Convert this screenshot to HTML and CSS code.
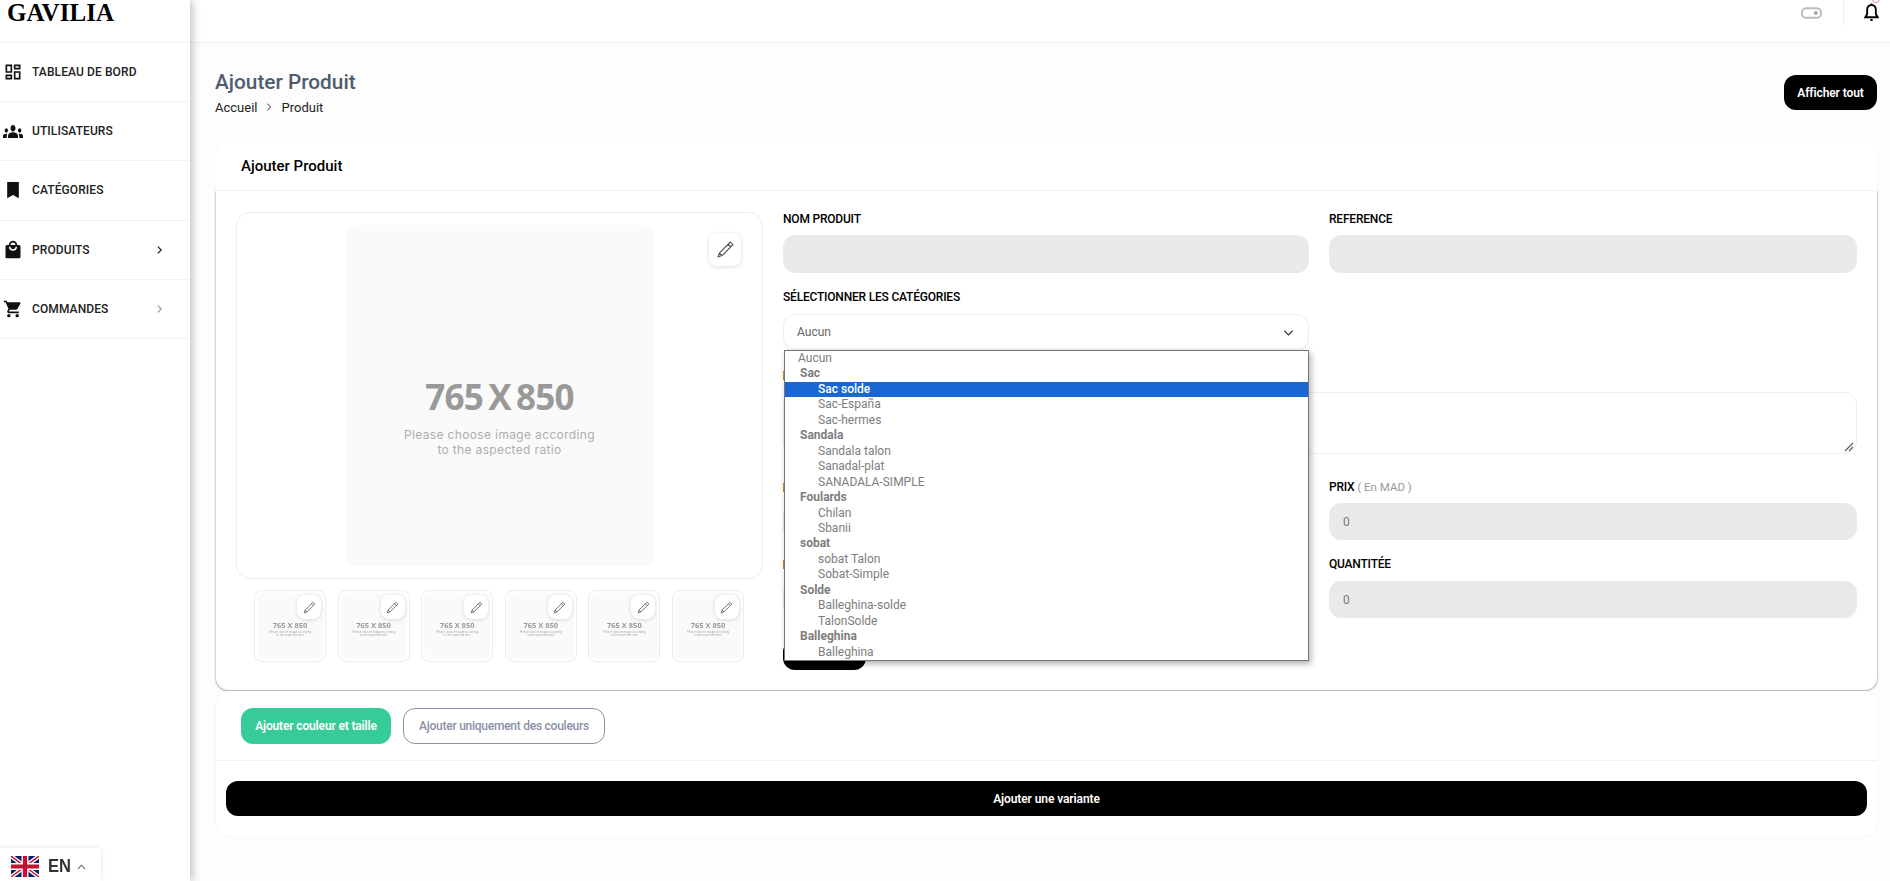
FILE: index.html
```html
<!DOCTYPE html>
<html lang="fr">
<head>
<meta charset="utf-8">
<title>Ajouter Produit</title>
<link rel="stylesheet" href="styles.css">
</head>
<body>
<div class="app">
  <aside class="sidebar">
    <div class="logo">GAVILIA</div>
    <nav class="menu">
      <a class="menu-item"><svg class="menu-icon" viewBox="0 0 24 24"><path d="M19 5v2h-4V5h4M9 5v6H5V5h4m10 8v6h-4v-6h4M9 17v2H5v-2h4M21 3h-8v6h8V3zM11 3H3v10h8V3zm10 8h-8v10h8V11zm-10 4H3v6h8v-6z"/></svg><span>TABLEAU DE BORD</span></a>
      <a class="menu-item"><span class="icon-slot"><svg class="icon-group" viewBox="0 5 24 14" preserveAspectRatio="none"><path d="M12 12.75c1.63 0 3.07.39 4.24.9 1.08.48 1.76 1.56 1.76 2.73V18H6v-1.61c0-1.18.68-2.26 1.76-2.73 1.17-.52 2.61-.91 4.24-.91zM4 13c1.1 0 2-.9 2-2s-.9-2-2-2-2 .9-2 2 .9 2 2 2zm1.13 1.1C4.76 14.04 4.39 14 4 14c-.99 0-1.93.21-2.78.58C.48 14.9 0 15.62 0 16.43V18h4.5v-1.61c0-.83.23-1.61.63-2.29zM20 13c1.1 0 2-.9 2-2s-.9-2-2-2-2 .9-2 2 .9 2 2 2zm4 3.43c0-.81-.48-1.53-1.22-1.85C21.93 14.21 20.99 14 20 14c-.39 0-.76.04-1.13.1.4.68.63 1.46.63 2.29V18H24v-1.57zM12 6c1.66 0 3 1.34 3 3s-1.34 3-3 3-3-1.34-3-3 1.34-3 3-3z"/></svg></span><span>UTILISATEURS</span></a>
      <a class="menu-item"><svg class="menu-icon" viewBox="0 0 24 24"><path d="M5 2.500h14V22l-7-4-7 4z"/></svg><span>CATÉGORIES</span></a>
      <a class="menu-item"><svg class="menu-icon" viewBox="0 0 24 24"><path d="M19 6h-2c0-2.76-2.24-5-5-5S7 3.24 7 6H5c-1.1 0-1.99.9-1.99 2L3 20c0 1.1.9 2 2 2h14c1.1 0 2-.9 2-2V8c0-1.1-.9-2-2-2zm-7-3c1.66 0 3 1.34 3 3H9c0-1.66 1.34-3 3-3zm0 10c-2.76 0-5-2.24-5-5h2c0 1.66 1.34 3 3 3s3-1.34 3-3h2c0 2.76-2.24 5-5 5z"/></svg><span>PRODUITS</span><svg class="menu-chevron" viewBox="0 0 8 12"><path d="M2 2l4 4-4 4"/></svg></a>
      <a class="menu-item"><svg class="menu-icon" viewBox="0 0 24 24"><path d="M7 18c-1.100 0-1.990.9-1.990 2S5.900 22 7 22s2-.9 2-2-.9-2-2-2zM1 2v2h2l3.600 7.590-1.350 2.450c-.16.28-.25.61-.25.96 0 1.100.9 2 2 2h12v-2H7.420c-.14 0-.25-.11-.25-.25l.03-.12.9-1.630h7.450c.75 0 1.410-.41 1.750-1.030l3.580-6.490c.08-.14.12-.31.12-.48 0-.55-.45-1-1-1H5.210l-.94-2H1zm16 16c-1.100 0-1.990.9-1.990 2s.89 2 1.990 2 2-.9 2-2-.9-2-2-2z"/></svg><span>COMMANDES</span><svg class="menu-chevron muted" viewBox="0 0 8 12"><path d="M2 2l4 4-4 4"/></svg></a>
    </nav>
    <div class="lang">
      <svg class="flag" viewBox="0 0 60 45"><rect width="60" height="45" fill="#012169"/><path d="M0 0l60 45M60 0L0 45" stroke="#fff" stroke-width="9"/><path d="M0 0l60 45M60 0L0 45" stroke="#c8102e" stroke-width="3"/><path d="M30 0v45M0 22.500h60" stroke="#fff" stroke-width="15"/><path d="M30 0v45M0 22.500h60" stroke="#c8102e" stroke-width="9"/></svg>
      <span class="lang-code">EN</span>
      <svg class="lang-chevron" viewBox="0 0 10 6"><path d="M1 5l4-4 4 4"/></svg>
    </div>
  </aside>

  <div class="main">
    <header class="topbar">
      <svg class="toggle" viewBox="0 0 22 12"><rect x="1" y="1" width="20" height="10" rx="4.500"/><circle cx="15.500" cy="6" r="2.200"/></svg>
      <div class="topbar-sep"></div>
      <div class="bell-wrap">
        <span class="bell-badge"></span>
        <svg class="bell" viewBox="0 0 18 20"><path d="M9 2.200c-3 0-4.600 2.300-4.600 5v4.300L2.500 15h13l-1.900-3.500V7.200c0-2.700-1.600-5-4.600-5z"/><path d="M9 .6v1.600M7.800 18h2.400"/></svg>
      </div>
    </header>

    <main class="content">
      <div class="page-head">
        <div>
          <h1 class="page-title">Ajouter Produit</h1>
          <div class="crumbs"><span>Accueil</span><svg class="crumb-sep" viewBox="0 0 8 12"><path d="M2 2l4 4-4 4"/></svg><span>Produit</span></div>
        </div>
        <button class="btn-black btn-all">Afficher tout</button>
      </div>

      <section class="card card-form">
        <div class="card-head">Ajouter Produit</div>
        <div class="card-body">
          <div class="gallery">
            <div class="main-frame">
              <div class="placeholder">
                <div class="ph-size">765 X 850</div>
                <div class="ph-note">Please choose image according<br>to the aspected ratio</div>
              </div>
              <span class="edit edit-big"><svg viewBox="0 0 24 24"><path d="M17.500 3.500l3 3L8 19l-4.500 1.500L5 16zM15 6l3 3M5 16l3 3"/></svg></span>
            </div>
            <div class="thumbs">
              <div class="thumb"><div class="thumb-in"><div class="th-size">765 X 850</div><div class="th-note">Please choose image according<br>to the aspected ratio</div></div><span class="edit edit-small"><svg viewBox="0 0 24 24"><path d="M17.500 3.500l3 3L8 19l-4.500 1.500L5 16zM15 6l3 3M5 16l3 3"/></svg></span></div>
              <div class="thumb"><div class="thumb-in"><div class="th-size">765 X 850</div><div class="th-note">Please choose image according<br>to the aspected ratio</div></div><span class="edit edit-small"><svg viewBox="0 0 24 24"><path d="M17.500 3.500l3 3L8 19l-4.500 1.500L5 16zM15 6l3 3M5 16l3 3"/></svg></span></div>
              <div class="thumb"><div class="thumb-in"><div class="th-size">765 X 850</div><div class="th-note">Please choose image according<br>to the aspected ratio</div></div><span class="edit edit-small"><svg viewBox="0 0 24 24"><path d="M17.500 3.500l3 3L8 19l-4.500 1.500L5 16zM15 6l3 3M5 16l3 3"/></svg></span></div>
              <div class="thumb"><div class="thumb-in"><div class="th-size">765 X 850</div><div class="th-note">Please choose image according<br>to the aspected ratio</div></div><span class="edit edit-small"><svg viewBox="0 0 24 24"><path d="M17.500 3.500l3 3L8 19l-4.500 1.500L5 16zM15 6l3 3M5 16l3 3"/></svg></span></div>
              <div class="thumb"><div class="thumb-in"><div class="th-size">765 X 850</div><div class="th-note">Please choose image according<br>to the aspected ratio</div></div><span class="edit edit-small"><svg viewBox="0 0 24 24"><path d="M17.500 3.500l3 3L8 19l-4.500 1.500L5 16zM15 6l3 3M5 16l3 3"/></svg></span></div>
              <div class="thumb"><div class="thumb-in"><div class="th-size">765 X 850</div><div class="th-note">Please choose image according<br>to the aspected ratio</div></div><span class="edit edit-small"><svg viewBox="0 0 24 24"><path d="M17.500 3.500l3 3L8 19l-4.500 1.500L5 16zM15 6l3 3M5 16l3 3"/></svg></span></div>
            </div>
          </div>

          <div class="form">
            <div class="row row-1">
              <div><div class="label label-low">NOM PRODUIT</div><div class="input"></div></div>
              <div><div class="label label-low">REFERENCE</div><div class="input"></div></div>
            </div>
            <div class="row row-2">
              <div>
                <div class="label label-low label-select">SÉLECTIONNER LES CATÉGORIES</div>
                <div class="select">
                  <span>Aucun</span>
                  <svg class="select-chevron" viewBox="0 0 12 8"><path d="M1.500 1.500 6 6l4.500-4.500"/></svg>
                  <div class="dropdown">
                    <div class="opt-none">Aucun</div>
                    <div class="opt-group">Sac</div>
                    <div class="opt selected">Sac solde</div>
                    <div class="opt">Sac-España</div>
                    <div class="opt">Sac-hermes</div>
                    <div class="opt-group">Sandala</div>
                    <div class="opt">Sandala talon</div>
                    <div class="opt">Sanadal-plat</div>
                    <div class="opt">SANADALA-SIMPLE</div>
                    <div class="opt-group">Foulards</div>
                    <div class="opt">Chilan</div>
                    <div class="opt">Sbanii</div>
                    <div class="opt-group">sobat</div>
                    <div class="opt">sobat Talon</div>
                    <div class="opt">Sobat-Simple</div>
                    <div class="opt-group">Solde</div>
                    <div class="opt">Balleghina-solde</div>
                    <div class="opt">TalonSolde</div>
                    <div class="opt-group">Balleghina</div>
                    <div class="opt">Balleghina</div>
                  </div>
                </div>
              </div>
            </div>
            <div class="row-wide">
              <div class="label-slot"><span class="label-edge"></span></div>
              <div class="textarea">
                <svg class="grip" viewBox="0 0 10 10"><path d="M1 9l8-8M5 9l4-4"/></svg>
              </div>
            </div>
            <div class="row row-3">
              <div><div class="label-slot label-slot-tight"><span class="label-edge"></span></div><div class="input input-short"></div></div>
              <div><div class="label label-tight">PRIX <span class="unit">( En MAD )</span></div><div class="input input-short">0</div></div>
            </div>
            <div class="row row-4">
              <div><div class="label-slot"><span class="label-edge"></span></div><div class="input input-short"></div></div>
              <div><div class="label">QUANTITÉE</div><div class="input input-short">0</div></div>
            </div>
            <div class="hidden-btn"></div>
          </div>
        </div>
      </section>

      <section class="card card-variant">
        <div class="variant-tabs">
          <button class="btn-green">Ajouter couleur et taille</button>
          <button class="btn-outline">Ajouter uniquement des couleurs</button>
        </div>
        <div class="variant-foot">
          <button class="btn-black btn-wide">Ajouter une variante</button>
        </div>
      </section>
    </main>
  </div>
</div>
</body>
</html>
```
FILE: styles.css
```css
* { box-sizing: border-box; }
html, body { margin: 0; height: 100%; overflow: hidden; }
body { font-family: Roboto, "Liberation Sans", sans-serif; background: #fdfdfd; color: #000; }
button { font-family: inherit; border: 0; cursor: pointer; }

.app { display: flex; height: 881px; }

/* Sidebar */
.sidebar { position: relative; z-index: 2; flex: 0 0 190px; background: #fff; box-shadow: 3px 0 8px rgba(0,0,0,.22); }
.logo { height: 43px; padding: 1px 0 0 7px; font: 700 25px/24px "Liberation Serif", serif; letter-spacing: .1px; border-bottom: 1px solid #f2f2f2; }
.menu { display: flex; flex-direction: column; }
.menu-item { height: 59.200px; display: flex; align-items: center; padding: 0 0 0 3px; border-bottom: 1px solid #f2f2f2; font-size: 12px; font-weight: 500; color: #222; letter-spacing: .1px; }
.menu-icon { width: 20px; height: 20px; margin-right: 9px; fill: #111; flex: none; }
.icon-slot { width: 20px; height: 20px; margin-right: 9px; flex: none; display: flex; align-items: center; }
.icon-group { width: 20px; height: 15px; fill: #111; }
.menu-chevron { width: 7px; height: 10px; margin-left: auto; margin-right: 27px; fill: none; stroke: #222; stroke-width: 1.500; }
.menu-chevron.muted { stroke: #999; }
.lang { position: absolute; left: 0; bottom: 0; width: 101px; height: 33px; background: #fff; display: flex; align-items: center; padding: 4px 0 0 11px; box-shadow: 0 0 5px rgba(0,0,0,.1); }
.flag { width: 28px; height: 21px; }
.lang-code { margin-left: 9px; width: 21px; font: 700 18px "Liberation Sans", sans-serif; color: #333; transform: scaleX(.92); transform-origin: left; }
.lang-chevron { width: 9px; height: 6px; margin-left: 8px; fill: none; stroke: #666; stroke-width: 1.200; }

/* Top bar */
.main { flex: 1; min-width: 0; }
.topbar { height: 43px; background: #fff; border-bottom: 1px solid #f2f2f2; display: flex; align-items: flex-start; justify-content: flex-end; padding-right: 10px; }
.toggle { width: 21px; height: 12px; margin-top: 7px; fill: none; stroke: #bbb; stroke-width: 2; }
.toggle circle { fill: #aaa; stroke: none; }
.topbar-sep { width: 1px; height: 26px; background: #f0f0f0; margin: 0 19px 0 21px; }
.bell-wrap { position: relative; width: 17px; height: 23px; }
.bell-badge { position: absolute; left: 9px; top: -6px; width: 8px; height: 9px; border: 1.500px solid #f08a8a; border-radius: 50%; }
.bell { position: absolute; left: 0; top: 3px; width: 17px; height: 19px; fill: none; stroke: #000; stroke-width: 2; }

/* Content */
.content { padding: 0 13px 0 25px; }
.page-head { height: 99px; display: flex; justify-content: space-between; align-items: flex-start; padding-top: 26px; }
.page-title { margin: 0; font-size: 20.800px; line-height: 26px; font-weight: 500; color: #4f5b70; }
.crumbs { display: flex; align-items: center; margin-top: 5px; font-size: 13px; line-height: 16px; color: #222; }
.crumb-sep { width: 8px; height: 10px; margin: 0 8px 2px 8px; fill: none; stroke: #333; stroke-width: 1.200; }
.btn-black { background: #000; color: #fff; font-weight: 600; font-size: 12px; letter-spacing: -.1px; }
.btn-all { width: 93px; height: 35px; margin-top: 6px; border-radius: 12px; }

.card { background: #fff; border-radius: 12px; margin-left: 1px; }
.card-form { height: 548px; box-shadow: 0 0 2px rgba(0,0,0,.07); }
.card-head { position: relative; z-index: 1; height: 49px; background: #fff; border-radius: 12px 12px 0 0; display: flex; align-items: center; padding-left: 25px; font-size: 15px; font-weight: 500; border-bottom: 1px solid #eee; }
.card-body { display: flex; gap: 20px; height: 499px; padding: 21px 20px 0; border-radius: 0 0 12px 12px; box-shadow: 0 1px 2px rgba(50,50,80,.35), 1px 0 2px rgba(0,0,0,.1), -1px 0 2px rgba(0,0,0,.1); }

/* Gallery */
.gallery { flex: 0 0 527px; }
.main-frame { position: relative; height: 367px; border: 1px solid #ececec; border-radius: 14px; display: flex; justify-content: center; padding-top: 12px; }
.placeholder { width: 308px; height: 341px; background: #fafafa; border-radius: 8px; display: flex; flex-direction: column; align-items: center; justify-content: center; text-align: center; padding-top: 42px; }
.ph-size { font: 700 35px/40px "Open Sans", sans-serif; color: #999; word-spacing: -3px; letter-spacing: -.8px; }
.ph-note { margin-top: 10px; font: 400 12px/15px Inter, sans-serif; color: #adadad; letter-spacing: .35px; }
.edit { position: absolute; background: #fff; box-shadow: 0 1px 4px rgba(0,0,0,.14); display: flex; align-items: center; justify-content: center; }
.edit svg { fill: none; stroke: #555; stroke-width: 1.300; }
.edit-big { top: 20px; right: 21px; width: 32px; height: 33px; border-radius: 8px; }
.edit-big svg { width: 21px; height: 21px; }
.thumbs { display: flex; justify-content: space-between; margin: 11px 19px 0 18px; }
.thumb { position: relative; width: 72px; height: 72px; border: 1px solid #ececec; border-radius: 8px; padding: 2px; }
.thumb-in { height: 100%; background: #fafafa; border-radius: 6px; display: flex; flex-direction: column; align-items: center; padding-top: 27px; text-align: center; filter: blur(.25px); }
.th-size { font: 700 7.500px/10px "Open Sans", sans-serif; color: #999; }
.th-note { font: 400 2.800px/3.200px Inter, sans-serif; color: #aaa; margin-top: 1px; }
.edit-small { top: 4px; right: 4px; width: 24px; height: 24px; border-radius: 8px; }
.edit-small svg { width: 15px; height: 15px; }

/* Form */
.form { flex: 1; min-width: 0; margin-top: -1px; }
.row { display: grid; grid-template-columns: 526px 1fr; gap: 20px; }
.label { font-size: 12px; line-height: 14px; font-weight: 500; letter-spacing: -.2px; margin-bottom: 10px; color: #000; }
.label-low { height: 15px; padding-top: 1px; margin-bottom: 9px; }
.label-low.label-select { margin-bottom: 10px; }
.label-tight { margin-bottom: 9px; }
.label-slot { height: 14px; margin-bottom: 10px; display: flex; align-items: center; }
.label-slot-tight { margin-bottom: 9px; }
.label-edge { width: 1px; height: 9px; background: #c98a3c; }
.unit { color: #999; font-size: 11.500px; font-weight: 400; letter-spacing: 0; }
.input { height: 38px; background: #e9e9e9; border: 1px solid #eaeaea; border-radius: 12px; display: flex; align-items: center; padding-left: 13px; font-size: 12px; color: #777; }
.input-short { height: 37px; }
.row-2 { margin-top: 16px; }
.select { position: relative; height: 36px; border: 1px solid #eee; border-radius: 12px; display: flex; align-items: center; padding-left: 13px; font-size: 12px; color: #666; box-shadow: 0 1px 2px rgba(0,0,0,.05); }
.select-chevron { position: absolute; right: 14px; top: 14px; width: 11px; height: 8px; fill: none; stroke: #333; stroke-width: 1.300; }
.dropdown { position: absolute; z-index: 5; left: 0; right: -1px; top: 35px; height: 311px; background: #fff; border: 1px solid #767676; box-shadow: 2px 3px 6px rgba(0,0,0,.3); font-size: 12px; line-height: 15.450px; color: #7d7d7d; }
.opt-none { padding-left: 13px; }
.opt-group { padding-left: 15px; font-weight: 700; }
.opt { padding-left: 33px; }
.opt.selected { background: #1967d2; color: #fff; font-weight: 500; }
.row-wide { margin-top: 18px; }
.textarea { position: relative; height: 62px; border: 1px solid #eee; border-radius: 12px; }
.grip { position: absolute; right: 2px; bottom: 1px; width: 10px; height: 10px; fill: none; stroke: #555; stroke-width: 1.100; }
.row-3 { margin-top: 26px; }
.row-4 { margin-top: 17px; }
.hidden-btn { width: 83px; height: 30px; margin-top: 22px; background: #000; border-radius: 12px; }

/* Variant card */
.card-variant { height: 145px; margin-top: 1px; box-shadow: 0 0 2px rgba(0,0,0,.08); }
.variant-tabs { height: 70px; padding: 17px 0 0 25px; display: flex; align-items: flex-start; gap: 12px; border-bottom: 1px solid #f2f2f2; }
.btn-green { width: 150px; height: 36px; border-radius: 12px; background: #36cb97; color: #fff; font-size: 12px; font-weight: 600; letter-spacing: -.15px; }
.btn-outline { width: 202px; height: 36px; border-radius: 12px; background: #fff; border: 1px solid #8a90a5; color: #8a90a5; font-size: 12px; font-weight: 500; letter-spacing: -.25px; }
.variant-foot { padding: 20px 10px 0; }
.btn-wide { width: 100%; height: 35px; border-radius: 12px; }
```
